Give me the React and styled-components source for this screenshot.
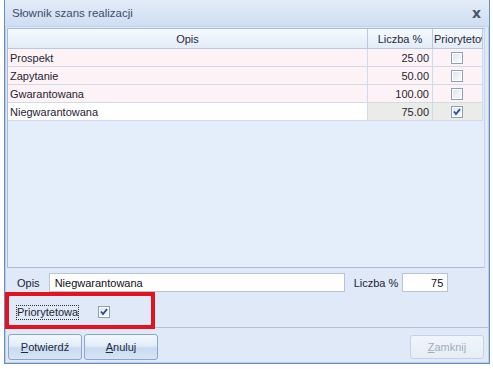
import React from 'react'
import styled, { createGlobalStyle } from 'styled-components'

const GlobalStyle = createGlobalStyle`
  html, body {
    margin: 0;
    padding: 0;
    background: #ffffff;
  }
  body {
    font-family: 'Liberation Sans', Arial, sans-serif;
    font-size: 11px;
    color: #000;
  }
`

const rows = [
  { opis: 'Prospekt', liczba: '25.00', prio: false },
  { opis: 'Zapytanie', liczba: '50.00', prio: false },
  { opis: 'Gwarantowana', liczba: '100.00', prio: false },
  { opis: 'Niegwarantowana', liczba: '75.00', prio: true, selected: true },
]

const Page = styled.div`
  width: 493px;
  height: 369px;
  padding-left: 4px;
  box-sizing: border-box;
  position: relative;
`

const Dialog = styled.div`
  width: 486px;
  height: 364px;
  box-sizing: border-box;
  border: 1px solid #6c8cbc;
  border-top: none;
  box-shadow: inset 1px 0 0 #b9cde8, inset -1px 0 0 #b9cde8, inset 0 -1px 0 #b9cde8;
  background: #dfe9f7;
  display: flex;
  flex-direction: column;
`

const TitleBar = styled.div`
  height: 27px;
  display: flex;
  align-items: center;
  justify-content: space-between;
  padding: 0 8px 0 7px;
  background: linear-gradient(#e3ecf8, #cfdef2);
  border-bottom: 1px solid #c2d3ea;
  box-sizing: border-box;
`

const Title = styled.span`
  font-size: 11.5px;
  color: #3a4d6e;
`

const CloseX = styled.span`
  font-family: 'DejaVu Sans', sans-serif;
  font-weight: bold;
  font-size: 14px;
  color: #4a5568;
`

const Content = styled.div`
  flex: 1;
  padding: 1px 4px 0 2px;
  display: flex;
  flex-direction: column;
`

const Grid = styled.div`
  height: 240px;
  border: 1px solid #a6bbd8;
  border-right-color: #c7d6ea;
  background: #e4eefb;
  box-sizing: border-box;
`

const Table = styled.div`
  display: grid;
  grid-template-columns: 360px 65px 50px;
`

const Head = styled.div`
  height: 20px;
  box-sizing: border-box;
  background: linear-gradient(#f7faff, #e2ebf7);
  border-right: 1px solid #b8c9e0;
  border-bottom: 1px solid #b8c9e0;
  display: flex;
  align-items: center;
  justify-content: ${p => p.$align || 'center'};
  padding: 0 1px;
  color: #1e2a3d;
  white-space: nowrap;
  overflow: hidden;
`

const Cell = styled.div`
  height: 18px;
  box-sizing: border-box;
  background: ${p => p.$bg};
  border-right: 1px solid #d0dbea;
  border-bottom: 1px solid #d0dbea;
  display: flex;
  align-items: center;
  justify-content: ${p => p.$align || 'flex-start'};
  padding: 0 3px 0 2px;
  color: #1d2433;
  white-space: nowrap;
`

const FormRow = styled.div`
  display: flex;
  align-items: center;
  height: ${p => p.$h}px;
  padding-left: ${p => p.$pl || 0}px;
`

const Label = styled.span`
  color: #1d2433;
  margin-left: ${p => p.$ml || 0}px;
  margin-right: ${p => p.$mr || 0}px;
`

const Input = styled.div`
  width: ${p => p.$w}px;
  height: 19px;
  box-sizing: border-box;
  background: #fff;
  border: 1px solid #b4c4d9;
  display: flex;
  align-items: center;
  justify-content: ${p => p.$align || 'flex-start'};
  padding: 0 4px 0 5px;
  color: #111;
`

const FocusLabel = styled.span`
  outline: 1px dotted #333;
  padding: 0 0 1px 0;
  color: #1d2433;
`

const CheckSlot = styled.span`
  display: flex;
  margin-left: ${p => p.$ml}px;
`

const Separator = styled.div`
  height: 1px;
  background: #b7c3d2;
  margin: 0 -4px 0 -2px;
`

const ButtonBar = styled.div`
  flex: 1;
  display: flex;
  align-items: flex-start;
  padding: 6px 1px 0 1px;
  gap: 2px;
`

const Button = styled.div`
  width: 74px;
  height: ${p => (p.$disabled ? 24 : 26)}px;
  margin-top: ${p => (p.$disabled ? 1 : 0)}px;
  box-sizing: border-box;
  border: 1px solid ${p => (p.$disabled ? '#c5d2e3' : '#8aa6cd')};
  border-radius: 3px;
  background: ${p =>
    p.$disabled
      ? 'linear-gradient(#f1f5fb, #e6edf6)'
      : 'linear-gradient(#f3f8fe 0%, #e2ecf8 45%, #c9dbf1 55%, #d6e4f6 100%)'};
  display: flex;
  align-items: center;
  justify-content: center;
  color: ${p => (p.$disabled ? '#a3acb8' : '#1d2a44')};
  margin-left: ${p => (p.$push ? 'auto' : '0')};
  & u {
    text-decoration: underline;
  }
`

const RedBox = styled.div`
  position: absolute;
  left: 5px;
  top: 292px;
  width: 150px;
  height: 37px;
  box-sizing: border-box;
  border: 4px solid #e2131f;
`

const Check = ({ checked }) => (
  <svg width="12" height="12" viewBox="0 0 12 12">
    <defs>
      <linearGradient id={checked ? 'cbg1' : 'cbg0'} x1="0" y1="0" x2="1" y2="1">
        <stop offset="0" stopColor="#dfe6ef" />
        <stop offset="1" stopColor="#f8fafc" />
      </linearGradient>
    </defs>
    <rect x="0.5" y="0.5" width="11" height="11" fill="#fff" stroke="#8e9fb8" />
    <rect x="2" y="2" width="8" height="8" fill={`url(#${checked ? 'cbg1' : 'cbg0'})`} />
    {checked && (
      <path d="M3 5.5 L5 8 L9 3.2" fill="none" stroke="#2a4f95" strokeWidth="1.8" />
    )}
  </svg>
)

export default function App() {
  return (
    <Page>
      <GlobalStyle />
      <Dialog>
        <TitleBar>
          <Title>Słownik szans realizacji</Title>
          <CloseX>x</CloseX>
        </TitleBar>
        <Content>
          <Grid>
            <Table>
              <Head>Opis</Head>
              <Head>Liczba %</Head>
              <Head $align="flex-start">Priorytetowa</Head>
              {rows.map(r => (
                <React.Fragment key={r.opis}>
                  <Cell $bg={r.selected ? '#ffffff' : '#fdf3f6'}>{r.opis}</Cell>
                  <Cell $bg={r.selected ? '#ebebe7' : '#fdf3f6'} $align="flex-end">
                    {r.liczba}
                  </Cell>
                  <Cell $bg={r.selected ? '#ebebe7' : '#fdf3f6'} $align="center">
                    <Check checked={r.prio} />
                  </Cell>
                </React.Fragment>
              ))}
            </Table>
          </Grid>
          <FormRow $h={29} $pl={10}>
            <Label $mr={9}>Opis</Label>
            <Input $w={296}>Niegwarantowana</Input>
            <Label $ml={9} $mr={4}>Liczba %</Label>
            <Input $w={46} $align="flex-end">75</Input>
          </FormRow>
          <FormRow $h={30} $pl={10}>
            <FocusLabel>Priorytetowa</FocusLabel>
            <CheckSlot $ml={20}>
              <Check checked />
            </CheckSlot>
          </FormRow>
          <Separator />
          <ButtonBar>
            <Button><span><u>P</u>otwierdź</span></Button>
            <Button><span><u>A</u>nuluj</span></Button>
            <Button $disabled $push><span><u>Z</u>amknij</span></Button>
          </ButtonBar>
        </Content>
      </Dialog>
      <RedBox />
    </Page>
  )
}
